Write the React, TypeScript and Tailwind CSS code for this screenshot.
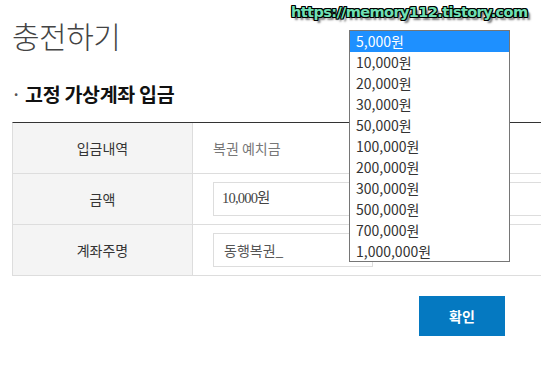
import React from "react";

const options = [
  "5,000원",
  "10,000원",
  "20,000원",
  "30,000원",
  "50,000원",
  "100,000원",
  "200,000원",
  "300,000원",
  "500,000원",
  "700,000원",
  "1,000,000원",
];

export default function App() {
  const kr = "font-['Noto_Sans_CJK_KR','Noto_Sans',sans-serif]";
  return (
    <div className={`relative w-[541px] h-[369px] overflow-hidden bg-white pl-[12px] ${kr}`}>
      <h1 className="mt-[15px] text-[30px] leading-[40px] font-light text-[#444] tracking-[-0.5px]">충전하기</h1>
      <div className="mt-[27px] flex items-center h-[24px]">
        <span className="w-[13px] text-[14px] text-[#555] font-bold leading-none">·</span>
        <span className="text-[19.5px] font-bold text-[#111] leading-[24px] tracking-[-0.3px]">고정 가상계좌 입금</span>
      </div>
      <div className="mt-[16px] border-t border-[#333] border-l border-l-[#ddd]">
        <div className="flex h-[51px] border-b border-[#ddd]">
          <div className="w-[180px] shrink-0 bg-[#f4f4f4] border-r border-[#ddd] flex items-center justify-center text-[14px] text-[#333]">입금내역</div>
          <div className="flex items-center pl-[20px] text-[14px] text-[#777]">복권 예치금</div>
        </div>
        <div className="flex h-[51px] border-b border-[#ddd]">
          <div className="w-[180px] shrink-0 bg-[#f4f4f4] border-r border-[#ddd] flex items-center justify-center text-[14px] text-[#333]">금액</div>
          <div className="flex items-center pl-[20px]">
            <div className="w-[400px] h-[34px] border border-[#ddd] flex items-center pl-[8px] text-[14.5px] text-[#444] font-['Liberation_Serif','Noto_Sans_CJK_KR',serif] tracking-[-0.8px]">10,000원</div>
          </div>
        </div>
        <div className="flex h-[51px] border-b border-[#ddd]">
          <div className="w-[180px] shrink-0 bg-[#f4f4f4] border-r border-[#ddd] flex items-center justify-center text-[14px] text-[#333]">계좌주명</div>
          <div className="flex items-center pl-[20px]">
            <div className="w-[160px] h-[34px] border border-[#ddd] flex items-center pl-[10px] text-[14px] text-[#555]">동행복권_</div>
          </div>
        </div>
      </div>
      <div className="mt-[20px] flex justify-end pr-[36px]">
        <button className="w-[86px] h-[40px] bg-[#0579c1] text-white text-[14px] font-bold">확인</button>
      </div>

      <div className="absolute left-[349px] top-[30px] w-[161px] h-[232px] border border-[#767676] bg-white">
        {options.map((o, i) => (
          <div
            key={o}
            className={`h-[21px] pl-[6px] flex items-center text-[14px] ${i === 0 ? "bg-[#1e90ff] text-white" : "text-[#333]"}`}
          >
            {o}
          </div>
        ))}
      </div>

      <div className="absolute left-[291px] top-[0px] text-[14.5px] leading-[24px] font-bold text-[#6fe0b4] font-['DejaVu_Sans',sans-serif] tracking-[-0.6px] whitespace-nowrap [text-shadow:1px_0_0_#000,-1px_0_0_#000,0_1px_0_#000,0_-1px_0_#000,1px_1px_0_#000,-1px_-1px_0_#000,1px_-1px_0_#000,-1px_1px_0_#000,3px_3px_2px_#777]">
        https://memory112.tistory.com
      </div>
    </div>
  );
}
